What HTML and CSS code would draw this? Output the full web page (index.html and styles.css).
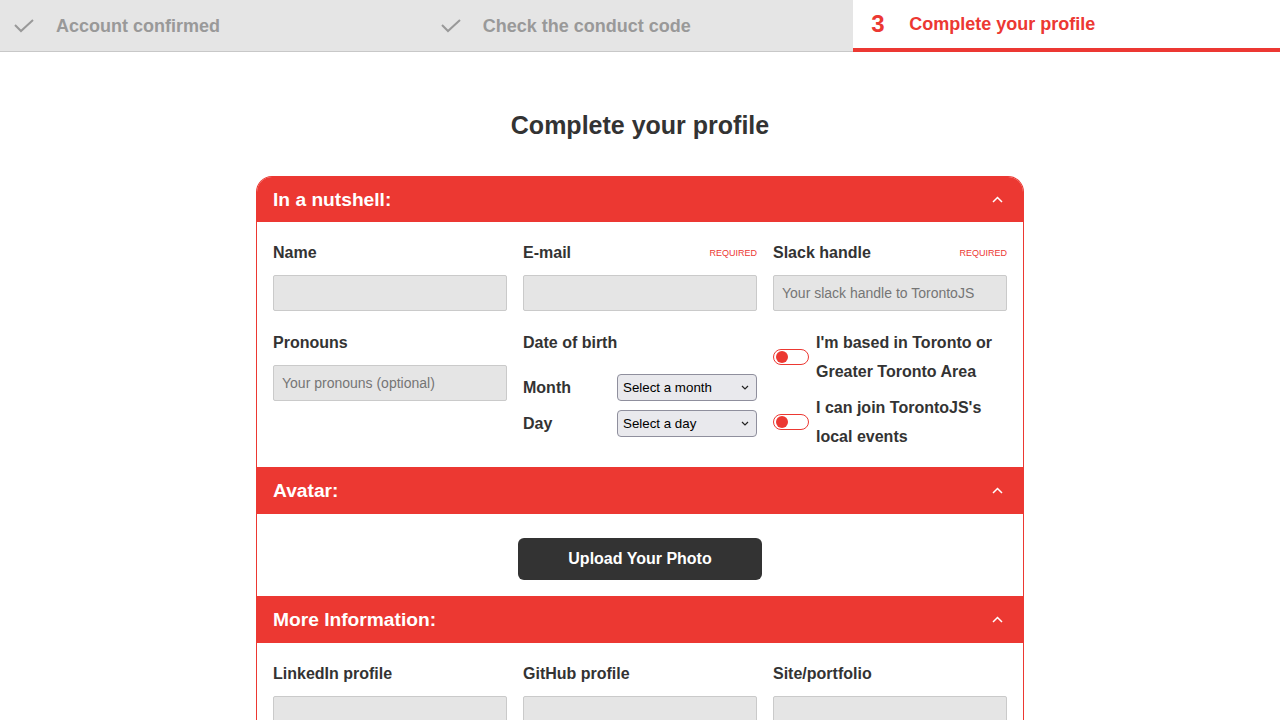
FILE: index.html
```html
<!DOCTYPE html>
<html lang="en">
<head>
<meta charset="utf-8">
<title>Complete your profile</title>
<link rel="stylesheet" href="styles.css">
</head>
<body>
<nav class="steps">
  <div class="step done">
    <svg class="check" width="22" height="14" viewBox="0 0 22 14"><polyline points="1,6 7,12 19,1" fill="none" stroke="#999" stroke-width="2"/></svg>
    <span class="step-text">Account confirmed</span>
  </div>
  <div class="step done">
    <svg class="check" width="22" height="14" viewBox="0 0 22 14"><polyline points="1,6 7,12 19,1" fill="none" stroke="#999" stroke-width="2"/></svg>
    <span class="step-text">Check the conduct code</span>
  </div>
  <div class="step active">
    <span class="step-num">3</span>
    <span class="step-text">Complete your profile</span>
  </div>
</nav>

<main class="main">
  <h1 class="title">Complete your profile</h1>

  <div class="card">
    <div class="section-head first">
      <h2 class="section-title">In a nutshell:</h2>
      <svg class="chev" width="11" height="7" viewBox="0 0 11 7"><polyline points="1,6 5.5,1.5 10,6" fill="none" stroke="#fff" stroke-width="1.5"/></svg>
    </div>
    <div class="section-body grid3">
      <div class="field">
        <div class="label-row"><label class="label">Name</label></div>
        <input class="input" type="text">
      </div>
      <div class="field">
        <div class="label-row"><label class="label">E-mail</label><span class="req">REQUIRED</span></div>
        <input class="input" type="text">
      </div>
      <div class="field">
        <div class="label-row"><label class="label">Slack handle</label><span class="req">REQUIRED</span></div>
        <input class="input" type="text" placeholder="Your slack handle to TorontoJS">
      </div>

      <div class="field">
        <div class="label-row"><label class="label">Pronouns</label></div>
        <input class="input" type="text" placeholder="Your pronouns (optional)">
      </div>
      <div class="field">
        <div class="label-row"><label class="label">Date of birth</label></div>
        <div class="dob-row dob-first">
          <span class="label">Month</span>
          <span class="select-wrap">
            <select class="select"><option>Select a month</option></select>
            <svg class="sel-chev" width="8" height="5" viewBox="0 0 8 5"><polyline points="1,1 4,4 7,1" fill="none" stroke="#222" stroke-width="1.2"/></svg>
          </span>
        </div>
        <div class="dob-row">
          <span class="label">Day</span>
          <span class="select-wrap">
            <select class="select"><option>Select a day</option></select>
            <svg class="sel-chev" width="8" height="5" viewBox="0 0 8 5"><polyline points="1,1 4,4 7,1" fill="none" stroke="#222" stroke-width="1.2"/></svg>
          </span>
        </div>
      </div>
      <div class="field toggles">
        <div class="toggle-row">
          <span class="toggle"><span class="knob"></span></span>
          <span class="toggle-text">I'm based in Toronto or Greater Toronto Area</span>
        </div>
        <div class="toggle-row">
          <span class="toggle"><span class="knob"></span></span>
          <span class="toggle-text">I can join TorontoJS's local events</span>
        </div>
      </div>
    </div>

    <div class="section-head">
      <h2 class="section-title">Avatar:</h2>
      <svg class="chev" width="11" height="7" viewBox="0 0 11 7"><polyline points="1,6 5.5,1.5 10,6" fill="none" stroke="#fff" stroke-width="1.5"/></svg>
    </div>
    <div class="section-body avatar-body">
      <button class="upload" type="button">Upload Your Photo</button>
    </div>

    <div class="section-head">
      <h2 class="section-title">More Information:</h2>
      <svg class="chev" width="11" height="7" viewBox="0 0 11 7"><polyline points="1,6 5.5,1.5 10,6" fill="none" stroke="#fff" stroke-width="1.5"/></svg>
    </div>
    <div class="section-body grid3">
      <div class="field">
        <div class="label-row"><label class="label">LinkedIn profile</label></div>
        <input class="input" type="text">
      </div>
      <div class="field">
        <div class="label-row"><label class="label">GitHub profile</label></div>
        <input class="input" type="text">
      </div>
      <div class="field">
        <div class="label-row"><label class="label">Site/portfolio</label></div>
        <input class="input" type="text">
      </div>
    </div>
  </div>
</main>
</body>
</html>
```

FILE: styles.css
```css
* { box-sizing: border-box; }

html, body {
  margin: 0;
  padding: 0;
  background: #fff;
  font-family: "Liberation Sans", Arial, sans-serif;
  color: #333;
}

.steps {
  display: flex;
  height: 52px;
}

.step {
  flex: none;
  width: 33.3333%;
  display: flex;
  align-items: center;
  font-size: 18px;
  font-weight: bold;
}

.step.done {
  background: #e5e5e5;
  border-bottom: 1px solid #c8c8c8;
  color: #999;
  padding-left: 14px;
  padding-top: 2px;
}

.check {
  margin-right: 20px;
  margin-top: -2px;
}

.step.active {
  background: #fff;
  border-bottom: 4px solid #ec3832;
  color: #ec3832;
  padding-left: 18px;
}

.step-num {
  font-size: 24px;
  width: 38px;
}

.main {
  padding-top: 58px;
}

.title {
  margin: 0 0 36px;
  text-align: center;
  font-size: 25px;
  line-height: 30px;
  font-weight: bold;
  color: #333;
}

.card {
  width: 768px;
  margin: 0 auto;
  border: 1px solid #ec3832;
  border-bottom: 0;
  border-radius: 16px 16px 0 0;
  overflow: hidden;
}

.section-head {
  height: 47px;
  background: #ec3832;
  display: flex;
  align-items: center;
  justify-content: space-between;
  padding: 0 20px 0 16px;
}

.section-head.first {
  height: 45px;
}

.section-title {
  margin: 0;
  font-size: 19.2px;
  font-weight: bold;
  color: #fff;
}

.chev { display: block; }

.section-body {
  padding: 21px 16px 16px;
}

.grid3 {
  display: grid;
  grid-template-columns: repeat(3, 234px);
  column-gap: 16px;
  row-gap: 22px;
}

.field {
  display: flex;
  flex-direction: column;
}

.label-row {
  display: flex;
  justify-content: space-between;
  align-items: center;
  height: 20px;
  margin-bottom: 12px;
}

.label {
  font-size: 16px;
  font-weight: bold;
  color: #333;
  line-height: 20px;
}

.req {
  font-size: 9px;
  color: #ec3832;
}

.input {
  width: 100%;
  height: 36px;
  background: #e5e5e5;
  border: 1px solid #cacaca;
  border-radius: 2px;
  padding: 0 8px;
  font-family: "Liberation Sans", Arial, sans-serif;
  font-size: 14px;
  color: #333;
  outline: none;
}

.input::placeholder { color: #757575; }

.dob-row {
  display: flex;
  align-items: center;
  height: 27px;
  margin-bottom: 9px;
}

.dob-first { margin-top: 9px; }

.dob-row .label { width: 94px; }

.select-wrap {
  position: relative;
  display: block;
  width: 140px;
  height: 27px;
}

.select {
  appearance: none;
  -webkit-appearance: none;
  width: 140px;
  height: 27px;
  background: #e9e9ed;
  border: 1px solid #8f8f9d;
  border-radius: 4px;
  padding: 0 20px 0 5px;
  font-family: "Liberation Sans", Arial, sans-serif;
  font-size: 13.33px;
  color: #000;
}

.sel-chev {
  position: absolute;
  right: 8px;
  top: 11px;
  pointer-events: none;
}

.toggles {
  margin-top: -5px;
  gap: 7px;
}

.toggle-row {
  display: flex;
  align-items: center;
}

.toggle {
  flex: 0 0 36px;
  width: 36px;
  height: 16px;
  border: 1px solid #ec3832;
  border-radius: 8px;
  margin-right: 7px;
  display: flex;
  align-items: center;
  padding-left: 2px;
}

.knob {
  width: 12px;
  height: 12px;
  border-radius: 50%;
  background: #ec3832;
}

.toggle-text {
  font-size: 16px;
  font-weight: bold;
  line-height: 29px;
  color: #333;
}

.avatar-body {
  display: flex;
  justify-content: center;
  padding: 24px 16px 16px;
}

.upload {
  width: 244px;
  height: 42px;
  background: #333;
  color: #fff;
  border: 0;
  border-radius: 6px;
  font-family: "Liberation Sans", Arial, sans-serif;
  font-size: 16px;
  font-weight: bold;
}
```
